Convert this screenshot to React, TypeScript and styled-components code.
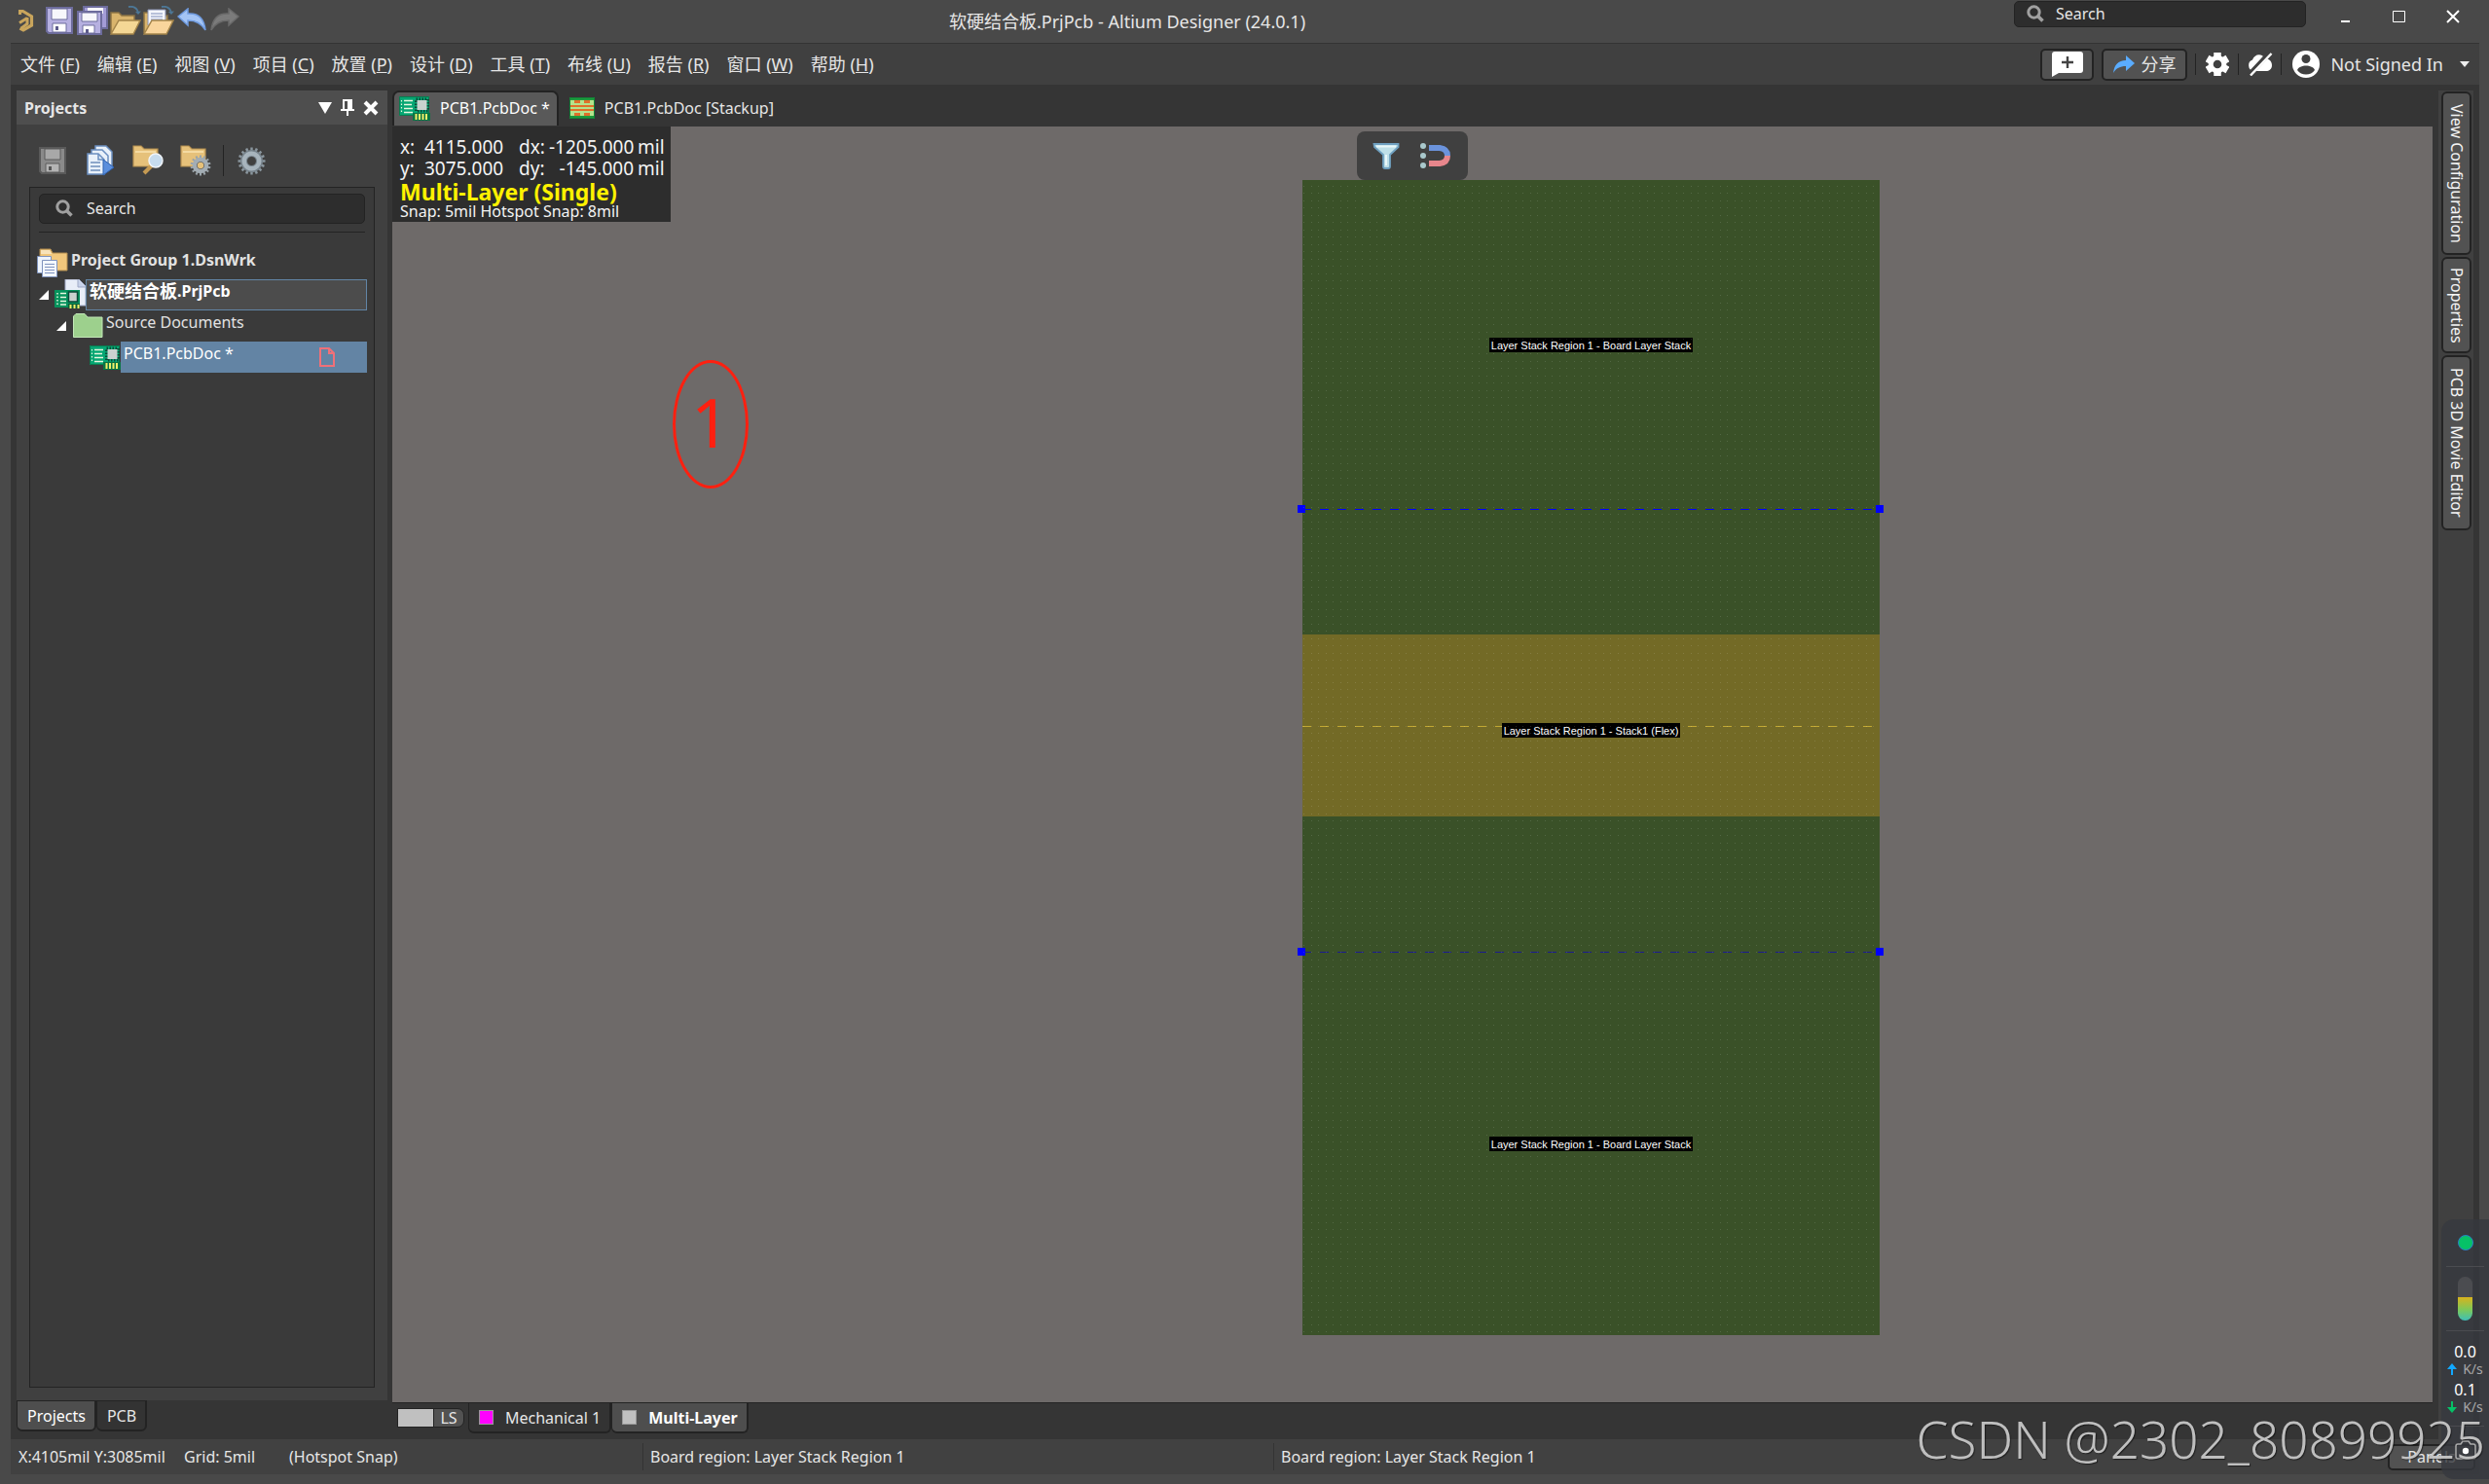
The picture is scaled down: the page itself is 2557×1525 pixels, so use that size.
import React from "react";
import styled, { createGlobalStyle, css } from "styled-components";

const c = {
  frame: "#494949",
  bar: "#404040",
  work: "#353535",
  panel: "#404040",
  well: "#3a3a3a",
  raised: "#4e4e4e",
  button: "#525252",
  line: "#232323",
  text: "#e6e6e6",
  canvas: "#6e6a69",
  field: "#2d2d2d",
};

const Global = createGlobalStyle`
  * { box-sizing: border-box; }
  body {
    margin: 0;
    background: ${c.frame};
    color: ${c.text};
    font: 16px/20px "Noto Sans", "Noto Sans CJK SC", sans-serif;
  }
  button, input { font: inherit; color: inherit; margin: 0; }
  button { padding: 0; border: 0; background: none; }
  svg { display: block; flex: none; }
`;

const Frame = styled.div`
  min-height: 100vh;
  display: flex;
  flex-direction: column;
  padding: 0 10px 10px 11px;
  overflow: hidden;
`;

/* ---------- title bar ---------- */
const TitleBar = styled.header`
  height: 45px;
  display: flex;
  align-items: flex-start;
  border-bottom: 1px solid #333;
`;
const QuickBar = styled.div`
  display: flex;
  align-items: center;
  gap: 2px;
  padding-top: 4px;
`;
const IconButton = styled.button`
  display: flex;
  align-items: center;
  justify-content: center;
  width: 32px;
  height: 34px;
`;
const Title = styled.h1`
  flex: 1;
  margin: 0;
  font-size: 18px;
  font-weight: 400;
  line-height: 44px;
  text-align: center;
`;
const SearchBox = styled.label<{ $tall?: boolean }>`
  display: flex;
  align-items: center;
  gap: ${(p) => (p.$tall ? 14 : 12)}px;
  height: ${(p) => (p.$tall ? 31 : 27)}px;
  padding: 0 ${(p) => (p.$tall ? 16 : 12)}px 1px;
  border: 1px solid ${c.line};
  border-radius: 5px;
  background: ${c.field};
  input {
    flex: 1;
    min-width: 0;
    padding: 0;
    border: 0;
    outline: 0;
    background: none;
    &::placeholder { color: ${c.text}; opacity: 1; }
  }
`;
const TopSearch = styled.div`
  width: 300px;
  padding-top: 1px;
`;
const WindowButtons = styled.div`
  display: flex;
  margin-left: 13px;
`;
const WindowButton = styled.button`
  width: 55px;
  height: 34px;
  display: flex;
  align-items: center;
  justify-content: center;
`;

/* ---------- menu bar ---------- */
const MenuBar = styled.nav`
  height: 42px;
  display: flex;
  align-items: center;
  justify-content: space-between;
  background: ${c.bar};
  font-size: 18px;
`;
const Menus = styled.div`
  display: flex;
  gap: 18px;
  padding-left: 10px;
`;
const MenuTools = styled.div`
  display: flex;
  align-items: center;
  padding-right: 10px;
`;
const ToolButton = styled.button<{ $w: number }>`
  display: flex;
  align-items: center;
  justify-content: center;
  gap: 6px;
  width: ${(p) => p.$w}px;
  height: 33px;
  margin-right: 8px;
  border: 2px solid ${c.line};
  border-radius: 5px;
  background: ${c.button};
`;
const Flat = styled.button<{ $w: number }>`
  display: flex;
  align-items: center;
  justify-content: center;
  width: ${(p) => p.$w}px;
  height: 33px;
`;
const Divider = styled.i<{ $h?: number }>`
  width: 1px;
  height: ${(p) => p.$h ?? 22}px;
  background: ${c.line};
`;
const Account = styled.button`
  display: flex;
  align-items: center;
  gap: 11px;
  padding-left: 11px;
  svg:last-child { margin-left: 6px; }
`;

/* ---------- work area ---------- */
const Work = styled.main`
  flex: 1;
  display: flex;
  padding: 6px 6px 0;
  background: ${c.work};
`;
const Side = styled.aside`
  width: 381px;
  display: flex;
  flex-direction: column;
  margin-right: 5px;
`;
const Panel = styled.section`
  flex: 1;
  display: flex;
  flex-direction: column;
  padding-bottom: 13px;
  background: ${c.panel};
`;
const PanelHead = styled.div`
  height: 35px;
  display: flex;
  align-items: center;
  gap: 9px;
  padding: 0 9px 0 8px;
  background: ${c.raised};
  h2 { flex: 1; margin: 0; font-size: 16px; }
`;
const PanelTools = styled.div`
  height: 64px;
  display: flex;
  align-items: center;
  gap: 17px;
  padding: 10px 0 0 21px;
`;
const Well = styled.div`
  flex: 1;
  margin: 0 13px;
  padding: 6px 7px 0 9px;
  border: 1px solid ${c.line};
  background: ${c.well};
`;
const Rule = styled.hr`
  margin: 8px 2px 16px 0;
  border: 0;
  border-top: 1px solid ${c.line};
`;
const SearchSlot = styled.div`
  padding-right: 2px;
`;
const Tree = styled.ul`
  list-style: none;
  margin: 0;
  padding: 0;
`;
const Node = styled.li<{ $indent: number }>`
  display: flex;
  height: 32px;
  padding-left: ${(p) => p.$indent}px;
`;
const Twisty = styled.span`
  width: 18px;
  padding-top: 11px;
`;
const NodeIcon = styled.span<{ $drop?: boolean }>`
  width: 32px;
  margin-left: -2px;
  padding-top: ${(p) => (p.$drop ? 4 : 0)}px;
`;
const NodeLabel = styled.span<{ $state?: "focus" | "selected"; $bold?: boolean }>`
  flex: 1;
  display: flex;
  padding: 2px 33px 0 3px;
  color: #e2e2e2;
  font-weight: ${(p) => (p.$bold ? 700 : 400)};
  ${(p) => p.$state === "focus" && css`
    padding: 1px 3px 0;
    color: #fff;
    border: 1px solid #6285a6;
    background: #4c4c4c;
  `}
  ${(p) => p.$state === "selected" && css`
    color: #fff;
    background: #6384a4;
  `}
  svg { margin: 4px 0 0 auto; }
`;
const Han = styled.span`
  font-size: 18px;
`;
const BottomTabs = styled.div`
  display: flex;
  height: 40px;
`;
const BottomTab = styled.button<{ $on?: boolean }>`
  display: flex;
  align-items: center;
  gap: 12px;
  height: 32px;
  padding: 0 9px 0 10px;
  border: 1px solid ${c.line};
  border-width: 1px 2px 2px 1px;
  border-radius: 0 0 6px 6px;
  background: ${(p) => (p.$on ? c.raised : "#333")};
  color: ${(p) => (p.$on ? "#fff" : c.text)};
`;

/* ---------- document ---------- */
const Doc = styled.section`
  flex: 1;
  min-width: 0;
  display: flex;
  flex-direction: column;
`;
const DocTabs = styled.div`
  display: flex;
  gap: 4px;
  height: 37px;
`;
const DocTab = styled.button<{ $on?: boolean }>`
  display: flex;
  align-items: center;
  gap: 10px;
  height: 36px;
  padding: 0 7px 2px 5px;
  border-radius: 7px 7px 0 0;
  border: 2px solid transparent;
  border-bottom: 0;
  ${(p) => p.$on && css`
    border-color: ${c.line};
    background: #595959;
    color: #fff;
  `}
`;
const Canvas = styled.div`
  position: relative;
  flex: 1;
  background: ${c.canvas};
`;
const Hud = styled.div`
  position: absolute;
  left: 0;
  top: 0;
  width: 286px;
  height: 98px;
  padding: 10px 8px 0;
  background: #2d2d2d;
  color: #f4f4f4;
  white-space: nowrap;
`;
const Coords = styled.div`
  display: grid;
  grid-template-columns: 25px 97px 31px 87px 1fr;
  font-size: 19px;
  line-height: 22px;
  span:nth-child(5n + 4) { text-align: right; }
  span:nth-child(5n) { padding-left: 4px; }
`;
const Layer = styled.strong`
  display: block;
  font-size: 23px;
  line-height: 26px;
  color: #fff200;
`;
const Snap = styled.div`
  line-height: 14px;
`;
const FloatBar = styled.div`
  position: absolute;
  left: 991px;
  top: 5px;
  display: flex;
  align-items: center;
  gap: 20px;
  width: 114px;
  height: 50px;
  padding: 0 6px 0 16px;
  border-radius: 8px;
  background: #404040;
  i { margin-left: auto; }
`;
const FloatTools = styled.div`
  display: flex;
  gap: 20px;
`;
const Mark = styled.div`
  position: absolute;
  left: 288px;
  top: 240px;
  width: 78px;
  height: 132px;
  border: 3px solid #ff2010;
  border-radius: 50%;
  color: #ff2010;
  font-size: 70px;
  line-height: 120px;
  text-align: center;
`;
const Board = styled.div`
  position: absolute;
  left: 935px;
  top: 55px;
  width: 593px;
  background: #3a5128;
  svg { position: absolute; inset: 0; }
`;
const Region = styled.div<{ $h: number; $flex?: boolean }>`
  position: relative;
  height: ${(p) => p.$h}px;
  display: flex;
  align-items: center;
  justify-content: center;
  padding-top: ${(p) => (p.$flex ? 10 : 0)}px;
  background: ${(p) => (p.$flex ? "#736a26" : "transparent")};
`;
const Tag = styled.span`
  position: relative;
  padding: 2px 2px 0;
  background: #000;
  color: #fff;
  font: 11px/13px "Liberation Sans", Arial, sans-serif;
`;
const Bend = styled.i<{ $color: string; $middle?: boolean }>`
  position: absolute;
  left: 0;
  right: 0;
  top: ${(p) => (p.$middle ? "50%" : "0")};
  height: 1px;
  background: repeating-linear-gradient(
    90deg,
    ${(p) => p.$color} 0 9px,
    transparent 9px 18px
  );
`;
const Handle = styled.b<{ $right?: boolean }>`
  position: absolute;
  top: -4px;
  ${(p) => (p.$right ? "right: -4px;" : "left: -5px;")}
  width: 8px;
  height: 8px;
  background: #00f;
`;
const LayerTabs = styled.div`
  display: flex;
  height: 38px;
  border-top: 1px solid ${c.line};
  ${BottomTab} {
    height: 31px;
    border-top: 0;
  }
`;
const LayerSet = styled.button`
  display: flex;
  height: 20px;
  margin: 5px 4px 0 5px;
  border: 1px solid ${c.line};
  border-radius: 0 7px 7px 0;
  background: ${c.button};
  line-height: 18px;
  i { width: 36px; height: 18px; background: #c0c0c0; }
  span { width: 31px; border-left: 1px solid ${c.line}; }
`;
const Swatch = styled.i<{ $color: string }>`
  width: 15px;
  height: 15px;
  border: 1px solid #999;
  background: ${(p) => p.$color};
`;

/* ---------- right rail ---------- */
const Rail = styled.div`
  width: 36px;
  margin-left: 6px;
  padding: 1px 2px 0 3px;
  display: flex;
  flex-direction: column;
  gap: 2px;
  background: ${c.panel};
`;
const RailTab = styled.button<{ $len: number }>`
  height: ${(p) => p.$len}px;
  border: 2px solid ${c.line};
  border-radius: 6px;
  background: ${c.button};
  color: #f4f4f4;
  writing-mode: vertical-rl;
  line-height: 26px;
`;

/* ---------- status bar ---------- */
const Status = styled.footer`
  height: 36px;
  display: grid;
  grid-template-columns: 170px 108px 363px 648px 1fr auto;
  align-items: center;
  padding: 0 4px 0 8px;
  background: #414141;
`;
const StatusCell = styled.span<{ $line?: boolean }>`
  line-height: 28px;
  ${(p) => p.$line && css`
    padding-left: 7px;
    border-left: 1px solid #333;
  `}
`;
const PanelsButton = styled.button`
  width: 90px;
  height: 27px;
  border: 2px solid ${c.line};
  border-radius: 5px;
  background: ${c.button};
`;

/* ---------- desktop overlays ---------- */
const Shot = styled.div`
  position: relative;
`;
const Monitor = styled.div`
  position: absolute;
  right: 0;
  bottom: 5px;
  width: 49px;
  height: 267px;
  display: flex;
  flex-direction: column;
  align-items: center;
  border-radius: 13px 0 0 13px;
  background: rgba(54, 56, 62, 0.8);
  color: #fff;
  line-height: 18px;
  hr {
    width: 39px;
    margin: 0;
    border: 0;
    border-top: 1px solid #4b4c50;
  }
`;
const Dot = styled.i`
  width: 16px;
  height: 16px;
  margin: 16px 0;
  border: 1px solid #2b7fc4;
  border-radius: 50%;
  background: #06c167;
`;
const Gauge = styled.i`
  width: 15px;
  height: 45px;
  margin: 10px 0;
  border-radius: 8px;
  background: linear-gradient(#4b4c50 0 21px, #d9b31c 21px, #7cc95a 34px, #3dbfb8);
`;
const Rates = styled.div`
  display: flex;
  flex-direction: column;
  gap: 3px;
  padding: 12px 0 10px;
`;
const Rate = styled.div`
  text-align: center;
  div {
    display: flex;
    align-items: center;
    gap: 6px;
    font-size: 14px;
    color: #a8a8a8;
  }
`;
const CameraSlot = styled.button`
  margin-top: 14px;
`;
const Watermark = styled.div`
  position: absolute;
  right: 4px;
  bottom: 11px;
  font-size: 53px;
  line-height: 70px;
  font-weight: 300;
  color: rgba(204, 204, 204, 0.92);
  text-shadow: 1px 1px 1px rgba(0, 0, 0, 0.5);
  white-space: nowrap;
  pointer-events: none;
`;

/* ---------- icons ---------- */
const Logo = () => (
  <svg width="16" height="24" viewBox="0 0 16 24" fill="none" stroke="#c9a55c">
    <path d="M1.500 6V2.500h3L13.500 8v9L5 22l-3.500-2" strokeWidth="3.200" />
    <path d="M1 14.500 9 9.500M3 20l6-4.500V9" strokeWidth="3" />
  </svg>
);
const Floppy = ({ gray }: { gray?: boolean }) => {
  const edge = gray ? "#5a5a5a" : "#6d6c9c";
  return (
    <svg width="28" height="28" viewBox="0 0 28 28">
      <path d="M1 1h26v26H3l-2-2z" fill={gray ? "#8a8a8a" : "#b6b0e0"} stroke={edge} strokeWidth="2" />
      <path d="M6 2h16v11H6z" fill={gray ? "#a8a8a8" : "#f7f7fb"} stroke={edge} />
      <path d="M7 17h14v9H7z" fill={gray ? "#b4b4b4" : "#fff"} stroke={edge} />
      <path d="M10 20h3v4h-3z" fill={gray ? "#555" : "#5c5b8a"} />
    </svg>
  );
};
const FloppyAll = () => (
  <svg width="32" height="30" viewBox="0 0 32 30">
    <path d="M7 1h24v22H7z" fill="#a39cd6" stroke="#6d6c9c" strokeWidth="2" />
    <path d="M11 2h16v6H11z" fill="#f7f7fb" />
    <path d="M1 6h24v23H1z" fill="#b6b0e0" stroke="#6d6c9c" strokeWidth="2" />
    <path d="M5 7h16v9H5z" fill="#f7f7fb" stroke="#6d6c9c" />
    <path d="M6 20h12v8H6z" fill="#fff" stroke="#6d6c9c" />
    <path d="M9 24h3v4H9z" fill="#5c5b8a" />
  </svg>
);
const OpenFolder = ({ doc }: { doc?: boolean }) => (
  <svg width="32" height="30" viewBox="0 0 32 30">
    <path d="M1 28V7h8l3 3h13v6" fill="#d9b46c" stroke="#8d7444" strokeWidth="1.500" />
    {doc && (
      <g>
        <path d="M5 4h18v16H5z" fill="#f4f6fc" stroke="#8a93b5" />
        <path d="M8 8h12M8 11h12M8 14h12" stroke="#7d8bb8" strokeWidth="1.200" />
      </g>
    )}
    <path d="M1 29 9 15h22l-7 14z" fill={doc ? "#f9d59c" : "#f4d795"} stroke="#a3844a" strokeWidth="1.500" />
    <path d="M19 1c6-1 9 2 10 6" fill="none" stroke="#4d7796" strokeWidth="1.800" />
    <path d="m26 6 3 3 3-3.500z" fill="#4d7796" />
  </svg>
);
const Arrow = ({ redo }: { redo?: boolean }) => (
  <svg width="30" height="26" viewBox="0 0 30 26">
    <path
      transform={redo ? "translate(30 0) scale(-1 1)" : undefined}
      d="M1 9 11 1v5c12-1 17 7 18 17-4-7-9-10-18-10v5z"
      fill={redo ? "#7b7b7b" : "#a4c4f4"}
      stroke={redo ? "#6a6a6a" : "#6f9be0"}
      strokeWidth="1.500"
    />
  </svg>
);
const Lens = () => (
  <svg width="18" height="18" viewBox="0 0 18 18" fill="none" stroke="#a0a0a0">
    <circle cx="7.500" cy="7.500" r="5.700" strokeWidth="3" />
    <path d="m11.500 11.500 5 5" strokeWidth="3.500" />
  </svg>
);
const teeth = (n: number, r: number, w: number, h: number, fill: string) =>
  Array.from({ length: n }, (_, i) => (
    <rect key={i} x={-w / 2} y={-r} width={w} height={h} fill={fill} transform={`rotate(${(360 / n) * i})`} />
  ));
const Cog = () => (
  <svg width="29" height="29" viewBox="-14.500 -14.500 29 29">
    {teeth(16, 14, 2.4, 5, "#8b979f")}
    <circle r="8" fill="none" stroke="#77838c" strokeWidth="7" />
    <circle r="7.800" fill="none" stroke="#a7b4bd" strokeWidth="4.500" />
  </svg>
);
const DocsPlay = () => (
  <svg width="28" height="32" viewBox="0 0 28 32">
    {[[9, 1], [5, 5], [1, 9]].map(([x, y]) => (
      <path key={x} d={`M${x} ${y}h11l6 6v15h-17z`} fill="#e9f1fa" stroke="#6b8fc0" strokeWidth="1.500" />
    ))}
    <path d="M12 9v6h6" fill="none" stroke="#6b8fc0" strokeWidth="1.500" />
    <path d="M4 18h10M4 22h10M4 26h10" stroke="#6f8fba" strokeWidth="1.500" />
    <path d="m17 15 11 8-11 8z" fill="#5b8fdd" stroke="#2f62b0" />
  </svg>
);
const FolderTool = ({ gear }: { gear?: boolean }) => (
  <svg width="32" height="32" viewBox="0 0 32 32">
    <path d="M1 22V1h8l3 3h14v18z" fill="#e6c17a" stroke="#b48f50" strokeWidth="1.200" />
    <path d="M3 7h21" stroke="#f8e2b0" strokeWidth="1.500" />
    {gear ? (
      <g transform="translate(21 21)">
        {teeth(14, 10.5, 2, 4, "#9aa3a9")}
        <circle r="6" fill="#4a4a4a" stroke="#a3adb4" strokeWidth="4.500" />
        <circle r="3.200" fill="#e6c17a" />
      </g>
    ) : (
      <g>
        <path d="m20 21-8 8" stroke="#c59a52" strokeWidth="4" />
        <circle cx="24" cy="16" r="7" fill="#c7dcee" stroke="#f0f4f8" strokeWidth="1.500" />
      </g>
    )}
  </svg>
);
const Pcb = () => (
  <svg width="32" height="25" viewBox="0 0 32 25">
    <path d="M0 0h31v20H0z" fill="#06a673" />
    <path d="M.5.5h30v19H.5z" fill="none" stroke="#0a7a4e" />
    <path d="M5 4.500h9M5 8.500h8M5 12.500h9M5 16.500h9" stroke="#e8f7df" strokeWidth="1.400" />
    <path d="M2.500 4v13" stroke="#e8f7df" strokeWidth="1.200" strokeDasharray="1.500 2" />
    <path d="M17.500 3h12v12h-12z" fill="none" stroke="#0b4a38" strokeWidth="3" strokeDasharray="1.500 1.500" />
    <path d="M18.500 4h10v10h-10z" fill="#c9d2cf" />
    <path d="M14 17h18v8H14z" fill="#0a7544" />
    <path d="M17.500 18v6m3.500-6v6m3.500-6v6m3.500-6v6" stroke="#f1f06a" strokeWidth="2" />
  </svg>
);
const Stackup = () => (
  <svg width="26" height="22" viewBox="0 0 26 22">
    <path d="M0 0h26v22H0z" fill="#b4e38c" />
    <path d="M0 1.500h26M0 20.500h26" stroke="#1d9a3c" strokeWidth="3" />
    <path d="M5 4.500h6m4 0h6M5 17.500h6m4 0h6" stroke="#e0702a" strokeWidth="3" />
    <path d="M0 9h26M0 13h26" stroke="#e0702a" strokeWidth="2" />
    <path d="M.5.5h25v21H.5z" fill="none" stroke="#128236" />
  </svg>
);
const GroupIcon = () => (
  <svg width="32" height="30" viewBox="0 0 32 30">
    <path d="M3 23V1h11l2 4h15v18z" fill="#f1c77c" stroke="#b08b4e" />
    <path d="M4 2h9l2 4H4z" fill="#f8e3ba" />
    <path d="M.5 8.500h14v17H.5z" fill="#eef4fc" stroke="#7f93bd" />
    <path d="M5.500 12.500h15v17h-15z" fill="#f3f8fe" stroke="#7f93bd" />
    <path d="M8 16.500h10M8 19.500h10M8 22.500h10M8 25.500h10" stroke="#7f93bd" />
  </svg>
);
const ProjectIcon = () => (
  <svg width="32" height="30" viewBox="0 0 32 30">
    <path d="M11 0h14l7 7v20H11z" fill="#e8edf8" stroke="#9fa9c6" />
    <path d="M24 0v8h8" fill="#c8d2ea" stroke="#9fa9c6" />
    <path d="M0 11h26v18H0z" fill="#06925c" />
    <path d="M6 14.500h6M6 18.500h6M6 22.500h6M6 26h6" stroke="#e8f7df" strokeWidth="1.500" />
    <path d="M3 14v13" stroke="#e8f7df" strokeWidth="1.500" strokeDasharray="1.500 2" />
    <path d="M14.500 13h9v10h-9z" fill="#c9d2cf" stroke="#0b4a38" strokeWidth="1.500" />
    <path d="M14 25h12v5H14z" fill="#0a5f38" />
    <path d="M16.500 26v4m4-4v4m4-4v4" stroke="#f1f06a" strokeWidth="2" />
  </svg>
);
const GreenFolder = () => (
  <svg width="32" height="32" viewBox="0 0 32 32">
    <path d="M1.500 27.500V6L4 3.500h9L16 7h15v20.500z" fill="#9dd08d" stroke="#c3e8b8" />
  </svg>
);
const Triangle = () => (
  <svg width="10" height="10" viewBox="0 0 10 10"><path d="M10 0v10H0z" fill="#fff" /></svg>
);
const RedDoc = () => (
  <svg width="16" height="20" viewBox="0 0 16 20" fill="none" stroke="#f07078" strokeWidth="2">
    <path d="M1 1h9l5 5v13H1zM10 1v5h5" />
  </svg>
);
const Bubble = () => (
  <svg width="32" height="26" viewBox="0 0 32 26">
    <path d="M3 0h26q3 0 3 3v16q0 3-3 3H7l-7 4V3q0-3 3-3z" fill="#fff" />
    <path d="M16 5v12M10 11h12" stroke="#444" strokeWidth="2.400" />
  </svg>
);
const Share = () => (
  <svg width="22" height="18" viewBox="0 0 22 18">
    <path d="M13 0l9 8-9 8v-5C7 11 3 13 0 18 1 10 5 5 13 5z" fill="#5aacff" />
  </svg>
);
const Gear = () => (
  <svg width="24" height="24" viewBox="-12 -12 24 24">
    {teeth(6, 12, 7.5, 6, "#fff")}
    <circle r="6.800" fill="none" stroke="#fff" strokeWidth="5" />
  </svg>
);
const CloudOff = () => (
  <svg width="27" height="24" viewBox="0 0 27 24">
    <path d="M7 19a6 6 0 0 1-1-11.500C8 2 15 0 18.500 6 23 6 26 9 26 13c0 4-3 6-6 6z" fill="#fff" />
    <path d="M2.500 23 23 1" stroke="#404040" strokeWidth="5" />
    <path d="M4 23.500 25.500 1" stroke="#fff" strokeWidth="2.400" />
  </svg>
);
const User = () => (
  <svg width="28" height="28" viewBox="0 0 28 28">
    <circle cx="14" cy="14" r="14" fill="#fff" />
    <circle cx="14" cy="8.500" r="4.500" fill="#404040" />
    <path d="M5 20c2-6 16-6 18 0-4 6-14 6-18 0z" fill="#404040" />
  </svg>
);
const Caret = () => (
  <svg width="10" height="6" viewBox="0 0 10 6"><path d="M0 0h10L5 6z" fill="#eee" /></svg>
);
const PanelMenu = () => (
  <svg width="14" height="12" viewBox="0 0 14 12"><path d="M0 0h14L7 12z" fill="#fff" /></svg>
);
const Pin = () => (
  <svg width="14" height="18" viewBox="0 0 14 18">
    <path d="M2 0h10v10h2v2H8v5H6v-5H0v-2h2zm2 2v8h3V2z" fill="#fff" fillRule="evenodd" />
  </svg>
);
const Cross = ({ thin }: { thin?: boolean }) => (
  <svg width="16" height="16" viewBox="0 0 16 16">
    <path d="m2 2 12 12M14 2 2 14" stroke="#fff" strokeWidth={thin ? 2 : 4} />
  </svg>
);
const Funnel = () => (
  <svg width="28" height="28" viewBox="0 0 28 28">
    <path d="M1.500 2h25v3L18 13v12q0 2-2 2h-3q-2 0-2-2V13L2 5z" fill="#bfe0e8" stroke="#6fa0c0" strokeWidth="1.800" />
    <path d="M4 4.500h20M14 13v11" stroke="#e9f7fa" strokeWidth="2" />
  </svg>
);
const Magnet = () => (
  <svg width="32" height="28" viewBox="0 0 32 28" fill="none">
    <g fill="#a9c8cc"><circle cx="4" cy="4" r="3" /><circle cx="4" cy="14" r="3" /><circle cx="4" cy="24" r="3" /></g>
    <path d="M10 6h11q8 1 8 8" stroke="#6b93dc" strokeWidth="6" />
    <path d="M10 22h11q8-1 8-8" stroke="#e8868c" strokeWidth="6" />
  </svg>
);
const NetArrow = ({ down }: { down?: boolean }) => (
  <svg width="10" height="12" viewBox="0 0 10 12">
    <path d={down ? "M5 12 0 6h4V0h2v6h4z" : "M5 0 0 6h4v6h2V6h4z"} fill={down ? "#06c167" : "#12a8ff"} />
  </svg>
);
const Camera = () => (
  <svg width="22" height="20" viewBox="0 0 22 20">
    <path d="M3 4h3l2-3h6l2 3h3q2 0 2 2v11q0 2-2 2H3q-2 0-2-2V6q0-2 2-2z" fill="none" stroke="#aaa" strokeWidth="1.500" />
    <circle cx="11" cy="11" r="3.200" fill="#fff" />
  </svg>
);
const DotGrid = () => (
  <svg width="100%" height="100%">
    <defs>
      <pattern id="dots" width="15" height="15" patternUnits="userSpaceOnUse">
        <path d="M1 6h1v1H1zM9 6h1v1H9zM1 13h1v1H1zM9 13h1v1H9z" fill="#fff" opacity=".13" />
      </pattern>
    </defs>
    <rect width="100%" height="100%" fill="url(#dots)" />
  </svg>
);

const menus = [
  ["文件", "F"], ["编辑", "E"], ["视图", "V"], ["项目", "C"], ["放置", "P"], ["设计", "D"],
  ["工具", "T"], ["布线", "U"], ["报告", "R"], ["窗口", "W"], ["帮助", "H"],
];

export default function App() {
  return (
    <Shot>
      <Global />
      <Frame>
        <TitleBar>
          <QuickBar>
            <IconButton aria-label="Altium"><Logo /></IconButton>
            <IconButton aria-label="Save"><Floppy /></IconButton>
            <IconButton aria-label="Save all"><FloppyAll /></IconButton>
            <IconButton aria-label="Open"><OpenFolder /></IconButton>
            <IconButton aria-label="Open project"><OpenFolder doc /></IconButton>
            <IconButton aria-label="Undo"><Arrow /></IconButton>
            <IconButton aria-label="Redo"><Arrow redo /></IconButton>
          </QuickBar>
          <Title>软硬结合板.PrjPcb - Altium Designer (24.0.1)</Title>
          <TopSearch>
            <SearchBox><Lens /><input placeholder="Search" aria-label="Search" /></SearchBox>
          </TopSearch>
          <WindowButtons>
            <WindowButton aria-label="Minimize">
              <svg width="10" height="14" viewBox="0 0 10 14"><path d="M0 11h9v2H0z" fill="#fff" /></svg>
            </WindowButton>
            <WindowButton aria-label="Maximize">
              <svg width="13" height="12" viewBox="0 0 13 12"><path d="M.5.5h12v11H.5z" fill="none" stroke="#fff" /></svg>
            </WindowButton>
            <WindowButton aria-label="Close"><Cross thin /></WindowButton>
          </WindowButtons>
        </TitleBar>

        <MenuBar>
          <Menus>
            {menus.map(([name, key]) => (
              <button key={key}>{name} (<u>{key}</u>)</button>
            ))}
          </Menus>
          <MenuTools>
            <ToolButton $w={55} aria-label="Comment"><Bubble /></ToolButton>
            <ToolButton $w={88}><Share />分享</ToolButton>
            <Divider />
            <Flat $w={43} aria-label="Settings"><Gear /></Flat>
            <Divider />
            <Flat $w={43} aria-label="Offline"><CloudOff /></Flat>
            <Divider />
            <Account><User />Not Signed In<Caret /></Account>
          </MenuTools>
        </MenuBar>

        <Work>
          <Side>
            <Panel>
              <PanelHead>
                <h2>Projects</h2>
                <button aria-label="Panel menu"><PanelMenu /></button>
                <button aria-label="Pin"><Pin /></button>
                <button aria-label="Close panel"><Cross /></button>
              </PanelHead>
              <PanelTools>
                <IconButton aria-label="Save"><Floppy gray /></IconButton>
                <IconButton aria-label="Compile"><DocsPlay /></IconButton>
                <IconButton aria-label="Explore"><FolderTool /></IconButton>
                <IconButton aria-label="Project options"><FolderTool gear /></IconButton>
                <PanelToolsEnd>
                  <Divider $h={32} />
                  <IconButton aria-label="Settings"><Cog /></IconButton>
                </PanelToolsEnd>
              </PanelTools>
              <Well>
                <SearchSlot>
                  <SearchBox $tall><Lens /><input placeholder="Search" aria-label="Search projects" /></SearchBox>
                </SearchSlot>
                <Rule />
                <Tree>
                  <Node $indent={0}>
                    <NodeIcon><GroupIcon /></NodeIcon>
                    <NodeLabel $bold>Project Group 1.DsnWrk</NodeLabel>
                  </Node>
                  <Node $indent={0}>
                    <Twisty><Triangle /></Twisty>
                    <NodeIcon><ProjectIcon /></NodeIcon>
                    <NodeLabel $bold $state="focus"><Han>软硬结合板</Han>.PrjPcb</NodeLabel>
                  </Node>
                  <Node $indent={18}>
                    <Twisty><Triangle /></Twisty>
                    <NodeIcon><GreenFolder /></NodeIcon>
                    <NodeLabel>Source Documents</NodeLabel>
                  </Node>
                  <Node $indent={54}>
                    <NodeIcon $drop><Pcb /></NodeIcon>
                    <NodeLabel $state="selected">PCB1.PcbDoc *<RedDoc /></NodeLabel>
                  </Node>
                </Tree>
              </Well>
            </Panel>
            <BottomTabs>
              <BottomTab $on>Projects</BottomTab>
              <BottomTab>PCB</BottomTab>
            </BottomTabs>
          </Side>

          <Doc>
            <DocTabs>
              <DocTab $on><Pcb />PCB1.PcbDoc *</DocTab>
              <DocTab><Stackup />PCB1.PcbDoc [Stackup]</DocTab>
            </DocTabs>
            <Canvas>
              <Hud>
                <Coords>
                  <span>x:</span><span>4115.000</span><span>dx:</span><span>-1205.000</span><span>mil</span>
                  <span>y:</span><span>3075.000</span><span>dy:</span><span>-145.000</span><span>mil</span>
                </Coords>
                <Layer>Multi-Layer (Single)</Layer>
                <Snap>Snap: 5mil Hotspot Snap: 8mil</Snap>
              </Hud>
              <Mark>1</Mark>
              <FloatBar>
                <FloatTools>
                  <button aria-label="Filter"><Funnel /></button>
                  <button aria-label="Snapping"><Magnet /></button>
                </FloatTools>
                <Divider $h={32} />
              </FloatBar>
              <Board>
                <Region $h={338}><Tag>Layer Stack Region 1 - Board Layer Stack</Tag></Region>
                <Region $h={129}><Bend $color="#0000ff" /><Handle /><Handle $right /></Region>
                <Region $h={187} $flex>
                  <Bend $color="#c2a832" $middle />
                  <Tag>Layer Stack Region 1 - Stack1 (Flex)</Tag>
                </Region>
                <Region $h={139} />
                <Region $h={394}>
                  <Bend $color="#1c1c8c" /><Handle /><Handle $right />
                  <Tag>Layer Stack Region 1 - Board Layer Stack</Tag>
                </Region>
                <DotGrid />
              </Board>
            </Canvas>
            <LayerTabs>
              <LayerSet><i /><span>LS</span></LayerSet>
              <BottomTab><Swatch $color="#ff00ff" />Mechanical 1</BottomTab>
              <BottomTab $on><Swatch $color="#c0c0c0" /><b>Multi-Layer</b></BottomTab>
            </LayerTabs>
          </Doc>

          <Rail>
            <RailTab $len={168}>View Configuration</RailTab>
            <RailTab $len={99}>Properties</RailTab>
            <RailTab $len={180}>PCB 3D Movie Editor</RailTab>
          </Rail>
        </Work>

        <Status>
          <StatusCell>X:4105mil Y:3085mil</StatusCell>
          <StatusCell>Grid: 5mil</StatusCell>
          <StatusCell>(Hotspot Snap)</StatusCell>
          <StatusCell $line>Board region: Layer Stack Region 1</StatusCell>
          <StatusCell $line>Board region: Layer Stack Region 1</StatusCell>
          <PanelsButton>Panels</PanelsButton>
        </Status>
      </Frame>

      <Monitor>
        <Dot />
        <hr />
        <Gauge />
        <hr />
        <Rates>
          <Rate>0.0<div><NetArrow />K/s</div></Rate>
          <Rate>0.1<div><NetArrow down />K/s</div></Rate>
        </Rates>
        <hr />
        <CameraSlot aria-label="Screenshot"><Camera /></CameraSlot>
      </Monitor>
      <Watermark>CSDN @2302_80899925</Watermark>
    </Shot>
  );
}

const PanelToolsEnd = styled.div`
  display: flex;
  align-items: center;
  gap: 12px;
  margin-left: -5px;
`;
